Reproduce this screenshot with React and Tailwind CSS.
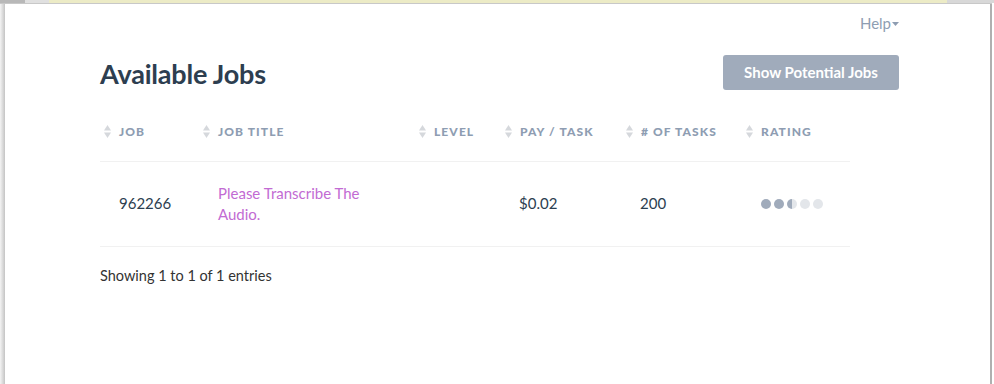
import React from 'react';

const columns = [
  { label: 'Job', width: 'w-[99px]' },
  { label: 'Job Title', width: 'w-[216px]' },
  { label: 'Level', width: 'w-[86px]' },
  { label: 'Pay / Task', width: 'w-[121px]' },
  { label: '# of Tasks', width: 'w-[120px]' },
  { label: 'Rating', width: 'w-[108px]' },
];

// little up/down sort arrows next to each header
const SortIcon = () => (
  <svg width="7" height="13" viewBox="0 0 7 13" className="shrink-0">
    <path d="M3.5 0 L7 5.5 L0 5.5 Z" fill="#d5d8dc" />
    <path d="M0 7.5 L7 7.5 L3.5 13 Z" fill="#d5d8dc" />
  </svg>
);

const Rating = ({ value }) => (
  <div className="flex items-center gap-[3px]">
    {[0, 1, 2, 3, 4].map((i) => {
      if (i + 1 <= value) return <span key={i} className="w-[10px] h-[10px] rounded-full bg-[#a0abbb]" />;
      if (i < value) return <span key={i} className="w-[10px] h-[10px] rounded-full bg-[linear-gradient(to_right,#a0abbb_50%,#e3e6ea_50%)]" />;
      return <span key={i} className="w-[10px] h-[10px] rounded-full bg-[#e3e6ea]" />;
    })}
  </div>
);

const App = () => {
  return (
    <div className="w-[994px] h-[384px] bg-white overflow-hidden font-['Lato',sans-serif] text-[#2c3e50]">
      {/* browser chrome strip on top */}
      <div className="flex h-[3px]">
        <div className="w-[25px] bg-[#b8b8b8]" />
        <div className="w-[24px] bg-[#e0e0e0]" />
        <div className="w-[898px] bg-[#ecebc6]" />
        <div className="flex-1 bg-[#d8d8d8]" />
      </div>
      <div className="flex h-[381px]">
        <div className="w-[5px] bg-[linear-gradient(to_right,#f4f4f4,#c4c4c4)] border-t border-[#c8c8c8]" />
        <div className="w-[987px] border-t border-[#c8c8c8] relative">
          <div className="flex justify-end pr-[93px] pt-[8px]">
            <span className="text-[15px] text-[#8e9db2] flex items-center">
              Help
              <svg width="7" height="4" viewBox="0 0 7 4" className="ml-[1px] mt-[2px]">
                <path d="M0 0 L7 0 L3.5 4 Z" fill="#8e9db2" />
              </svg>
            </span>
          </div>

          <div className="pl-[95px] pr-[93px] flex items-center justify-between mt-[20px]">
            <h1 className="text-[27px] font-bold leading-none text-[#2d3e50] tracking-[-0.2px] mt-[2px]">Available Jobs</h1>
            <button className="w-[176px] h-[35px] rounded-[3px] bg-[#a0abbb] text-white text-[15px] font-bold">
              Show Potential Jobs
            </button>
          </div>

          <div className="ml-[95px] w-[750px] mt-[19px]">
            <div className="flex h-[53px] pb-[6px] items-center border-b border-[#f1f1f1]">
              {columns.map((c) => (
                <div key={c.label} className={`${c.width} flex items-center gap-[8px] pl-[4px]`}>
                  <SortIcon />
                  <span className="text-[12px] font-black uppercase tracking-[1.1px] text-[#8e9db2]">{c.label}</span>
                </div>
              ))}
            </div>

            <div className="flex h-[85px] items-center border-b border-[#f1f1f1] text-[15px]">
              <div className="w-[99px] pl-[19px] text-[#2c3e50]">962266</div>
              <div className="w-[216px] pl-[19px] pr-[30px] leading-[21px] text-[#c26bd3] pt-[1px]">Please Transcribe The Audio.</div>
              <div className="w-[86px]" />
              <div className="w-[121px] pl-[18px]">$0.02</div>
              <div className="w-[120px] pl-[18px]">200</div>
              <div className="w-[108px] pl-[19px]">
                <Rating value={2.5} />
              </div>
            </div>

            <div className="mt-[18px] text-[14.5px] text-[#333]">Showing 1 to 1 of 1 entries</div>
          </div>

          <div className="absolute right-0 top-0 bottom-0 w-[2px] bg-[#b0b0b0]" />
        </div>
      </div>
    </div>
  );
};

export default App;
